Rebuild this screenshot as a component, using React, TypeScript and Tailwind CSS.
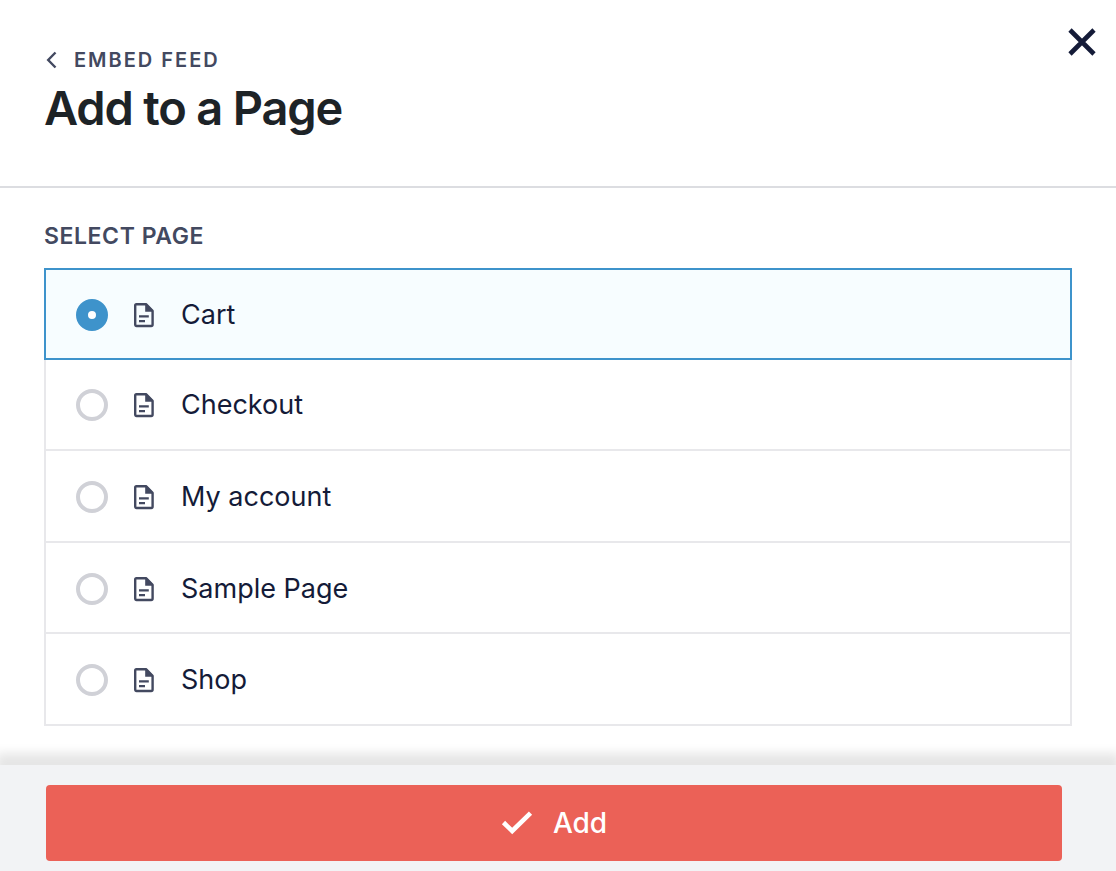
import { useState } from "react"
import { clsx } from "clsx"

const pages = [
  { id: "cart", name: "Cart" },
  { id: "checkout", name: "Checkout" },
  { id: "my-account", name: "My account" },
  { id: "sample-page", name: "Sample Page" },
  { id: "shop", name: "Shop" },
]

function PageIcon() {
  return (
    <svg viewBox="0 0 22 26" className="h-[26px] w-[22px] shrink-0 text-[#434960]" fill="none" aria-hidden="true">
      <path
        d="M3.4 2.2H13L19.6 8.8V22.6Q19.6 24 18.2 24H3.6Q2.2 24 2.2 22.6V3.6Q2.2 2.2 3.4 2.2Z"
        stroke="currentColor"
        strokeWidth="2.4"
        strokeLinejoin="round"
      />
      <path d="M12.2 1.8H13.5L20 8.5V9.8H12.2Z" fill="currentColor" />
      <path d="M6 14.4H15.8M6 19.2H12" stroke="currentColor" strokeWidth="2.2" />
    </svg>
  )
}

export default function App() {
  const [selected, setSelected] = useState("cart")

  return (
    <div className="flex min-h-screen flex-col bg-white font-['Inter',sans-serif]">
      {/* Header */}
      <header className="flex items-start justify-between border-b-2 border-[#dcdde1] pt-6 pr-5 pb-[46px] pl-11">
        <div className="pt-6">
          <button type="button" className="flex h-6 items-center gap-4 text-xl font-semibold tracking-widest text-[#434960]">
            <svg viewBox="0 0 14 18" className="h-[18px] w-[14px]" fill="none" aria-hidden="true">
              <path d="M11.5 1.5L4.2 9L11.5 16.5" stroke="currentColor" strokeWidth="2.4" />
            </svg>
            EMBED FEED
          </button>
          <h1 className="mt-1 text-[47px] leading-[64px] font-semibold tracking-tight text-[#1d2327]">Add to a Page</h1>
        </div>
        <button type="button" aria-label="Close" className="mt-1 text-[#141b38]">
          <svg viewBox="0 0 28 28" className="size-7" fill="none" aria-hidden="true">
            <path d="M2 2L26 26M26 2L2 26" stroke="currentColor" strokeWidth="4.6" />
          </svg>
        </button>
      </header>

      {/* Page list */}
      <main className="px-11 pt-8 pb-[39px]">
        <fieldset>
          <legend className="text-[23px] leading-8 font-semibold tracking-wide text-[#434960]">SELECT PAGE</legend>
          <div className="mt-4 grid h-[458px] auto-rows-fr">
            {pages.map((page) => {
              const isSelected = page.id === selected
              return (
                <label
                  key={page.id}
                  className={clsx(
                    "flex cursor-pointer items-center border-2 pt-0.5 pl-[30px] text-[27px] leading-9 text-[#141b38]",
                    isSelected ? "border-[#3e93cb] bg-[#f7fdff]" : "border-t-0 border-[#e8e8eb]"
                  )}
                >
                  <input
                    type="radio"
                    name="page"
                    value={page.id}
                    checked={isSelected}
                    onChange={() => setSelected(page.id)}
                    className="size-8 shrink-0 appearance-none rounded-full border-4 border-[#d0d1d7] bg-white checked:border-[12px] checked:border-[#3e93cb]"
                  />
                  <span className="mr-[26px] ml-[25px] flex">
                    <PageIcon />
                  </span>
                  {page.name}
                </label>
              )
            })}
          </div>
        </fieldset>
      </main>

      {/* Footer */}
      <footer className="mt-auto bg-[#f2f3f5] pt-5 pr-[54px] pb-[10px] pl-[46px] shadow-[0_-8px_10px_4px_rgba(0,0,0,0.1)]">
        <button
          type="button"
          className="flex h-[76px] w-full items-center justify-center gap-5 rounded bg-[#eb6157] text-[28px] font-medium text-white"
        >
          <svg viewBox="0 0 32 24" className="h-6 w-8" fill="none" aria-hidden="true">
            <path d="M2.5 11.5L11.2 20L29.5 2.2" stroke="currentColor" strokeWidth="4.6" />
          </svg>
          Add
        </button>
      </footer>
    </div>
  )
}
